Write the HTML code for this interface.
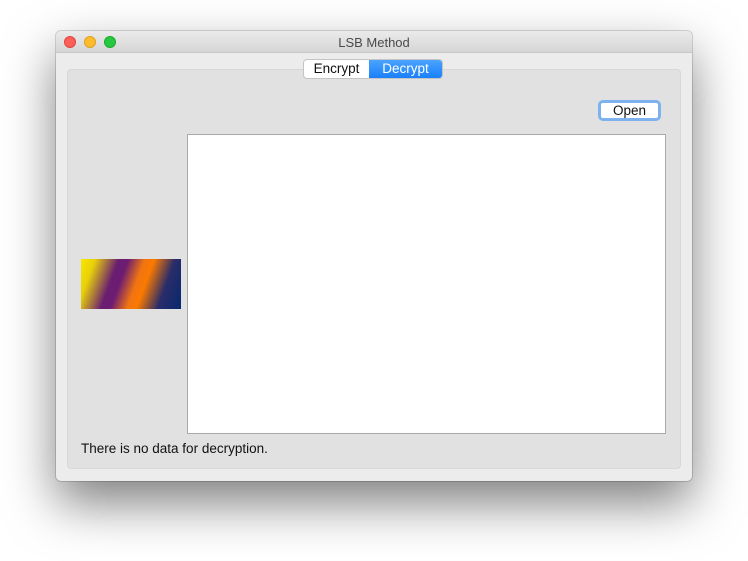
<!DOCTYPE html>
<html><head><meta charset="utf-8"><style>
*{margin:0;padding:0;box-sizing:border-box}
body{width:748px;height:561px;background:#fff;position:relative;overflow:hidden;font-family:"Liberation Sans",sans-serif;font-size:13px;color:#111}
.win{position:absolute;left:56px;top:31px;width:636px;height:450px;background:#ececec;border-radius:5px;box-shadow:0 22px 50px rgba(0,0,0,.5),0 0 0 1px rgba(0,0,0,.15)}
.tb{position:absolute;left:0;top:0;width:636px;height:22px;background:linear-gradient(#ebebeb,#d6d6d6);border-bottom:1px solid #c8c8c8;border-radius:5px 5px 0 0;text-align:center;line-height:24px;color:#4a4a4a;font-size:13px}
.dot{position:absolute;top:5px;width:12px;height:12px;border-radius:50%}
.box{position:absolute;left:11px;top:38px;width:614px;height:400px;background:#e1e1e1;border:1px solid #d8d8d8;border-radius:4px}
.seg{position:absolute;left:247px;top:28px;width:140px;height:20px;border:1px solid #c4c4c4;border-radius:4px;background:#fff;overflow:hidden;display:flex;line-height:18px;font-size:13.5px}
.seg div{text-align:center}
.open{position:absolute;left:542px;top:69px;width:63px;height:21px;border:3px solid #7db2ef;border-radius:5px;background:#fff;text-align:center;line-height:15px;font-size:13.5px}
.ta{position:absolute;left:131px;top:103px;width:479px;height:300px;background:#fff;border:1px solid #a9a9a9}
.img{position:absolute;left:25px;top:228px;width:100px;height:50px;background:linear-gradient(110deg,#f9e600 0%,#e8d00a 12%,#6a1e70 32%,#6c1c72 40%,#f07412 54%,#fb7a00 62%,#2a2c6a 80%,#06296e 100%)}
.st{position:absolute;left:25px;top:410px;font-size:13.5px}
</style></head><body>
<div class="win">
<div class="tb">LSB Method
<div class="dot" style="left:8px;background:#fc5f57;border:1px solid #e0443e"></div>
<div class="dot" style="left:28px;background:#fdbc2e;border:1px solid #dea123"></div>
<div class="dot" style="left:48px;background:#27c840;border:1px solid #1aab29"></div>
</div>
<div class="box"></div>
<div class="open">Open</div>
<div class="img"></div>
<div class="ta"></div>
<div class="st">There is no data for decryption.</div>
<div class="seg"><div style="width:66px">Encrypt</div><div style="width:74px;background:linear-gradient(#4aa3fd,#1a80fb);color:#fff">Decrypt</div></div>
</div>
</body></html>
